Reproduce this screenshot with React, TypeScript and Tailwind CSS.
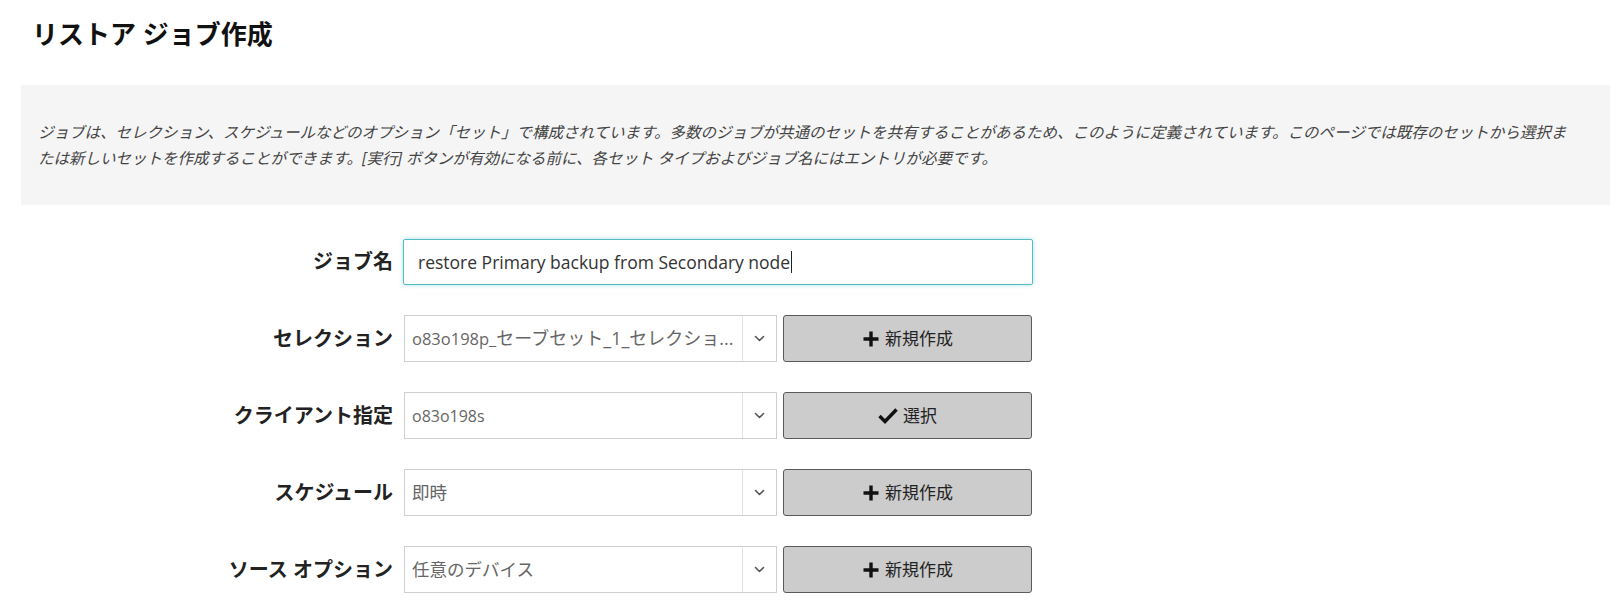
import React from "react";

const FONT = { fontFamily: '"Open Sans", "Noto Sans CJK JP", sans-serif' };

function Chevron() {
  return (
    <svg width="11" height="7" viewBox="0 0 11 7" fill="none">
      <path d="M1.5 1.5 L5.5 5.5 L9.5 1.5" stroke="#555" strokeWidth="1.6" strokeLinecap="round" strokeLinejoin="round" />
    </svg>
  );
}

function PlusIcon() {
  return (
    <svg width="18" height="18" viewBox="0 0 18 18">
      <path d="M9 1.5 V16.5 M1.5 9 H16.5" stroke="#111" strokeWidth="3.4" />
    </svg>
  );
}

function CheckIcon() {
  return (
    <svg width="20" height="17" viewBox="0 0 20 17">
      <path d="M1.5 9 L7 14.5 L18.5 2.5" stroke="#111" strokeWidth="3.4" fill="none" />
    </svg>
  );
}

function Label({ children }: { children: React.ReactNode }) {
  return (
    <div className="w-[393px] shrink-0 text-right text-[20px] font-bold text-[#222]">
      {children}
    </div>
  );
}

function SelectRow({
  label,
  value,
  button,
  check,
  size,
}: {
  label: string;
  value: React.ReactNode;
  button: string;
  check?: boolean;
  size: string;
}) {
  return (
    <div className="flex items-center h-[47px]">
      <Label>{label}</Label>
      <div className="ml-[11px] flex h-[47px] w-[373px] border border-[#cfcfcf] bg-white">
        <div className={"flex-1 flex items-center pl-[7px] text-[#666] min-w-0 border-r border-[#e2e2e2] " + size}>
          <span className="whitespace-nowrap overflow-hidden">{value}</span>
        </div>
        <div className="w-[33px] flex items-center justify-center">
          <Chevron />
        </div>
      </div>
      <button className="ml-[6px] h-[47px] w-[249px] flex items-center justify-center gap-[5px] bg-[#cccccc] border border-[#5a5a5a] rounded-[3px] text-[17px] text-[#222]">
        {check ? <CheckIcon /> : <PlusIcon />}
        <span>{button}</span>
      </button>
    </div>
  );
}

export default function App() {
  return (
    <div className="min-h-[611px] bg-white pl-[21px] pr-[10px]" style={FONT}>
      <h1 className="pt-[17px] pl-[11px] text-[26px] font-bold text-[#111] leading-[34px]">
        リストア ジョブ作成
      </h1>
      <div className="mt-[34px] h-[120px] bg-[#f5f5f5] flex items-center pl-[17px] pr-[20px]">
        <p className="italic text-[15.5px] leading-[26px] text-[#444]">
          ジョブは、セレクション、スケジュールなどのオプション「セット」で構成されています。多数のジョブが共通のセットを共有することがあるため、このように定義されています。このページでは既存のセットから選択ま
          <br />
          たは新しいセットを作成することができます。[実行] ボタンが有効になる前に、各セット タイプおよびジョブ名にはエントリが必要です。
        </p>
      </div>
      <div className="mt-[34px] -ml-[21px] flex flex-col gap-[30px]">
        <div className="flex items-center h-[46px]">
          <Label>ジョブ名</Label>
          <div className="ml-[10px] h-[46px] w-[630px] border border-[#56bcc4] rounded-[2px] shadow-[0_0_4px_rgba(86,188,196,0.5)] flex items-center pl-[14px] text-[17.5px] text-[#333]">
            restore Primary backup from Secondary node
            <span className="inline-block w-px h-[22px] bg-[#222] ml-px" />
          </div>
        </div>
        <SelectRow
          label="セレクション"
          value={
            <>
              o83o198p_<span className="text-[18px]">セーブセット_1_セレクショ...</span>
            </>
          }
          button="新規作成"
          size="text-[16.5px]"
        />
        <SelectRow label="クライアント指定" value="o83o198s" button="選択" check size="text-[16px]" />
        <SelectRow label="スケジュール" value="即時" button="新規作成" size="text-[17.5px]" />
        <SelectRow label="ソース オプション" value="任意のデバイス" button="新規作成" size="text-[17.5px]" />
      </div>
    </div>
  );
}
